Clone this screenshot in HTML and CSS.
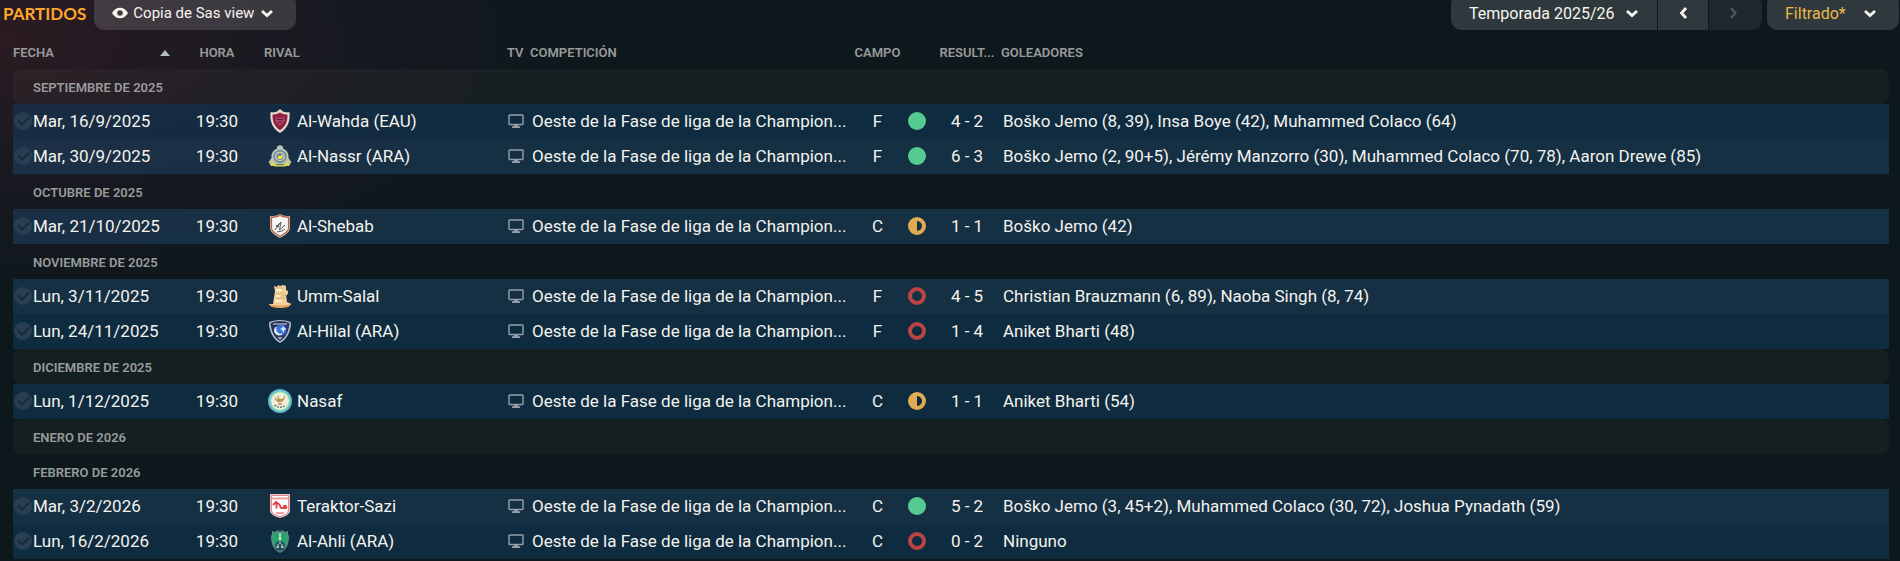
FILE: index.html
```html
<!DOCTYPE html>
<html lang="es">
<head>
  <meta charset="UTF-8">
  <meta name="viewport" content="width=device-width, initial-scale=1.0">
  <title>Partidos</title>
  <link rel="stylesheet" href="styles.css">
</head>
<body>
  <!-- shared icons -->
  <svg class="icon-defs" aria-hidden="true">
    <symbol id="chevron" viewBox="0 0 14 9"><path d="M2 2l5 4.600L12 2" fill="none" stroke="currentColor" stroke-width="2.800"/></symbol>
    <symbol id="tv" viewBox="0 0 16 14"><path d="M1.700 1h12.600a.7.7 0 0 1 .7.7v8.100a.7.7 0 0 1-.7.7H1.700a.7.7 0 0 1-.7-.7V1.700a.7.7 0 0 1 .7-.7z" fill="none" stroke="currentColor" stroke-width="1.400"/><path d="M6 10.500h4v1.700h2V14H4v-1.800h2z" fill="currentColor"/></symbol>
    <symbol id="win" viewBox="0 0 18 18"><circle cx="9" cy="9" r="9" fill="#55cb91"/></symbol>
    <symbol id="draw" viewBox="0 0 18 18"><path fill-rule="evenodd" d="M9 0a9 9 0 1 1 0 18A9 9 0 0 1 9 0zm0 4v10a5 5 0 0 0 0-10z" fill="#e0ac51"/></symbol>
    <symbol id="loss" viewBox="0 0 18 18"><circle cx="9" cy="9" r="7" fill="none" stroke="#b94445" stroke-width="4"/></symbol>
  </svg>

  <header class="toolbar">
    <h1>PARTIDOS</h1>
    <label class="control view">
      <svg class="eye" viewBox="0 0 16 12"><path fill-rule="evenodd" d="M0 6C2 2.500 4.800.7 8 .7s6 1.800 8 5.300c-2 3.500-4.800 5.300-8 5.300S2 9.500 0 6zm8-2.800a2.800 2.800 0 1 0 0 5.600 2.800 2.800 0 0 0 0-5.600z" fill="currentColor"/></svg>
      <select aria-label="Vista"><option>Copia de Sas view</option></select>
      <svg class="chevron"><use href="#chevron"/></svg>
    </label>
    <div class="season-group">
      <label class="control season">
        <select aria-label="Temporada"><option>Temporada 2025/26</option></select>
        <svg class="chevron"><use href="#chevron"/></svg>
      </label>
      <button class="control step" aria-label="Anterior"><svg class="arrow" viewBox="0 0 9 14"><path d="M7 2L2.500 7 7 12" fill="none" stroke="currentColor" stroke-width="2.800"/></svg></button>
      <button class="control step next" aria-label="Siguiente" disabled><svg class="arrow" viewBox="0 0 9 14"><path d="M2 2l4.500 5L2 12" fill="none" stroke="currentColor" stroke-width="2.200"/></svg></button>
    </div>
    <button class="control filter"><span>Filtrado*</span><svg class="chevron"><use href="#chevron"/></svg></button>
  </header>

  <main>
    <table class="fixtures">
      <colgroup>
        <col class="col-date">
        <col class="col-time">
        <col class="col-rival">
        <col class="col-tv">
        <col class="col-comp">
        <col class="col-venue">
        <col class="col-mark">
        <col class="col-result">
        <col>
      </colgroup>
      <thead>
        <tr>
          <th><div class="sorted">FECHA <svg class="sort" viewBox="0 0 10 6"><path d="M5 0l5 6H0z" fill="#b5bbc2"/></svg></div></th>
          <th class="center">HORA</th>
          <th>RIVAL</th>
          <th>TV</th>
          <th>COMPETICIÓN</th>
          <th class="center">CAMPO</th>
          <td></td>
          <th class="result">RESULT...</th>
          <th class="scorers">GOLEADORES</th>
        </tr>
      </thead>
      <tbody>
        <tr class="month"><th colspan="9">SEPTIEMBRE DE 2025</th></tr>
        <tr class="match">
          <td><label class="date"><input type="checkbox"> Mar, 16/9/2025</label></td>
          <td class="center">19:30</td>
          <td><div class="rival"><svg class="crest" viewBox="0 0 24 24"><path d="M12 0l3 2.500c2 .8 4 1 6.500.8.700 8-1 15.500-9.500 20.700C3.500 18.800 1.800 11.300 2.500 3.300 5 3.500 7 3.300 9 2.500z" fill="#e5dccb"/><path d="M12 3.500c2.500 1.500 4.800 2 7.500 2 0 7-1.500 11.800-7.500 15.700C6 17.300 4.500 12.500 4.500 5.500c2.700 0 5-.5 7.500-2z" fill="#8c2143"/><path d="M7.500 8.500h9v4L12 17l-4.500-4.500z" fill="#a9456a"/><path d="M9 10.500h6M10 13h4" stroke="#611536"/></svg>Al-Wahda (EAU)</div></td>
          <td><svg class="tv"><use href="#tv"/></svg></td>
          <td class="comp">Oeste de la Fase de liga de la Champion...</td>
          <td class="center">F</td>
          <td class="center"><svg class="mark"><use href="#win"/></svg></td>
          <td class="result">4 - 2</td>
          <td class="scorers">Boško Jemo (8, 39), Insa Boye (42), Muhammed Colaco (64)</td>
        </tr>
        <tr class="match">
          <td><label class="date"><input type="checkbox"> Mar, 30/9/2025</label></td>
          <td class="center">19:30</td>
          <td><div class="rival"><svg class="crest" viewBox="0 0 24 24"><path d="M12 1l3 1.500v2c4 1.500 6 5 5.500 9.500l3 4-2.500 4H3L.5 18l3-4C3 9.500 5 6 9 4.500v-2z" fill="#b8c1b5"/><path d="M4 17c2 3 5 4.500 8 4.500s6-1.500 8-4.500l2 3-5 2.500H7L2 20z" fill="#dfdc3e"/><circle cx="12" cy="12.500" r="6.500" fill="#64849a"/><circle cx="12" cy="12.500" r="5" fill="#c6cfb0"/><circle cx="12" cy="12.500" r="3.500" fill="#7185a1"/><path d="M10 12h3l1-2 1 3-2 2h-3z" fill="#f1eb39"/><path d="M8 20.500h8" stroke="#61756a"/></svg>Al-Nassr (ARA)</div></td>
          <td><svg class="tv"><use href="#tv"/></svg></td>
          <td class="comp">Oeste de la Fase de liga de la Champion...</td>
          <td class="center">F</td>
          <td class="center"><svg class="mark"><use href="#win"/></svg></td>
          <td class="result">6 - 3</td>
          <td class="scorers">Boško Jemo (2, 90+5), Jérémy Manzorro (30), Muhammed Colaco (70, 78), Aaron Drewe (85)</td>
        </tr>
        <tr class="month"><th colspan="9">OCTUBRE DE 2025</th></tr>
        <tr class="match">
          <td><label class="date"><input type="checkbox"> Mar, 21/10/2025</label></td>
          <td class="center">19:30</td>
          <td><div class="rival"><svg class="crest" viewBox="0 0 24 24"><path d="M12 0c3 1.800 6 2 10 2v12c0 4-5 7.500-10 10C7 21.500 2 18 2 14V2c4 0 7-.2 10-2z" fill="#b9b5b2"/><path d="M12 1.500c3 1.500 5.500 1.800 8.500 1.800V14c0 3.500-4.300 6-8.500 8.300C7.800 20 3.500 17.500 3.500 14V3.300c3 0 5.500-.3 8.500-1.800z" fill="#f8f8f7" stroke="#c2603a" stroke-width="1.200"/><path d="M7 16l6-8-1.500 8L17 11M8 11l3 2M9 18l5-1 3-2M12 9l-4 4" fill="none" stroke="#56585c"/></svg>Al-Shebab</div></td>
          <td><svg class="tv"><use href="#tv"/></svg></td>
          <td class="comp">Oeste de la Fase de liga de la Champion...</td>
          <td class="center">C</td>
          <td class="center"><svg class="mark"><use href="#draw"/></svg></td>
          <td class="result">1 - 1</td>
          <td class="scorers">Boško Jemo (42)</td>
        </tr>
        <tr class="month"><th colspan="9">NOVIEMBRE DE 2025</th></tr>
        <tr class="match">
          <td><label class="date"><input type="checkbox"> Lun, 3/11/2025</label></td>
          <td class="center">19:30</td>
          <td><div class="rival"><svg class="crest" viewBox="0 0 24 24"><path d="M5 20L7 7l-1-5 3 1 1-2 2 1 3-1 3 1v4l2 1v3l-2 1 1 7 4.500 2L20 23l-8 1-8-1L.500 20z" fill="#f3d09b"/><path d="M1 20c6 2 15 2 22 0l-3 3-8 .800L4 23z" fill="#e99e50"/><path d="M8 4h9M8 10l8-1M8 14h9M14 12l5-1" stroke="#dcb075"/><path d="M8 6h6M8 12h4M7 17h7" stroke="#fff0c7" stroke-width="2"/></svg>Umm-Salal</div></td>
          <td><svg class="tv"><use href="#tv"/></svg></td>
          <td class="comp">Oeste de la Fase de liga de la Champion...</td>
          <td class="center">F</td>
          <td class="center"><svg class="mark"><use href="#loss"/></svg></td>
          <td class="result">4 - 5</td>
          <td class="scorers">Christian Brauzmann (6, 89), Naoba Singh (8, 74)</td>
        </tr>
        <tr class="match">
          <td><label class="date"><input type="checkbox"> Lun, 24/11/2025</label></td>
          <td class="center">19:30</td>
          <td><div class="rival"><svg class="crest" viewBox="0 0 24 24"><path d="M1 3.500C5 0 19 0 23 3.500 23 13 18.500 20.500 12 24 5.500 20.500 1 13 1 3.500z" fill="#b7bccb"/><path d="M2.500 4.300C7 1.300 17 1.300 21.500 4.300 21 12 17.500 19 12 22.300 6.500 19 3 12 2.500 4.300z" fill="#27345f"/><path d="M5 5h14" stroke="#a2a8b8" stroke-width="1.500"/><circle cx="13" cy="11" r="5.500" fill="#3f73dc"/><path d="M15 7l1.500 2 2 1-2 1-1 3-1.500-3-2-1 2-1z" fill="#c8e5ff"/><path d="M8 8c-4 5 1 10 6 7-4 1-7-2-6-7z" fill="#f4f5fa" stroke="#f4f5fa"/><path d="M9 18h6l-3 3z" fill="#9aa1b4"/></svg>Al-Hilal (ARA)</div></td>
          <td><svg class="tv"><use href="#tv"/></svg></td>
          <td class="comp">Oeste de la Fase de liga de la Champion...</td>
          <td class="center">F</td>
          <td class="center"><svg class="mark"><use href="#loss"/></svg></td>
          <td class="result">1 - 4</td>
          <td class="scorers">Aniket Bharti (48)</td>
        </tr>
        <tr class="month"><th colspan="9">DICIEMBRE DE 2025</th></tr>
        <tr class="match">
          <td><label class="date"><input type="checkbox"> Lun, 1/12/2025</label></td>
          <td class="center">19:30</td>
          <td><div class="rival"><svg class="crest" viewBox="0 0 24 24"><circle cx="12" cy="12" r="12" fill="#63b5d4"/><circle cx="12" cy="12" r="10.300" fill="#7dddb0"/><circle cx="12" cy="12" r="8.800" fill="#f0eedc"/><path d="M7 6c-1 6 3 8 6 7s5-4 3-7c0 3-1 4-3 4s-3-1-2-4c-2 1-2 3-1 5-2-1-3-3-3-5z" fill="#b8984c"/><path d="M6.500 16c3 3 8 3 11 0" fill="none" stroke="#5d8066" stroke-width="1.500" stroke-dasharray="2 1"/><path d="M10 15h4" stroke="#df7662" stroke-width="1.500"/></svg>Nasaf</div></td>
          <td><svg class="tv"><use href="#tv"/></svg></td>
          <td class="comp">Oeste de la Fase de liga de la Champion...</td>
          <td class="center">C</td>
          <td class="center"><svg class="mark"><use href="#draw"/></svg></td>
          <td class="result">1 - 1</td>
          <td class="scorers">Aniket Bharti (54)</td>
        </tr>
        <tr class="month"><th colspan="9">ENERO DE 2026</th></tr>
        <tr class="month"><th colspan="9">FEBRERO DE 2026</th></tr>
        <tr class="match">
          <td><label class="date"><input type="checkbox"> Mar, 3/2/2026</label></td>
          <td class="center">19:30</td>
          <td><div class="rival"><svg class="crest" viewBox="0 0 24 24"><path d="M2 0h20v17c-1 4-6 6-10 7-4-1-9-3-10-7z" fill="#dcc7c9"/><path d="M3.500 1.500h17V17c-1 3-5 4.500-8.500 5.500C8.500 21.500 4.500 20 3.500 17z" fill="#fff" stroke="#ed8489"/><path d="M4 4.500h16" stroke="#ef9c9f" stroke-width="2"/><path d="M5 11l3-3 4 3M8.500 9v5.500M12 11c0 4 4 4 4 1 2-1 3 1 2 2h-3" fill="none" stroke="#e73c40" stroke-width="1.800"/><path d="M8 19h8" stroke="#f0a2a5" stroke-width="2"/></svg>Teraktor-Sazi</div></td>
          <td><svg class="tv"><use href="#tv"/></svg></td>
          <td class="comp">Oeste de la Fase de liga de la Champion...</td>
          <td class="center">C</td>
          <td class="center"><svg class="mark"><use href="#win"/></svg></td>
          <td class="result">5 - 2</td>
          <td class="scorers">Boško Jemo (3, 45+2), Muhammed Colaco (30, 72), Joshua Pynadath (59)</td>
        </tr>
        <tr class="match">
          <td><label class="date"><input type="checkbox"> Lun, 16/2/2026</label></td>
          <td class="center">19:30</td>
          <td><div class="rival"><svg class="crest" viewBox="0 0 24 24"><path d="M4 2l3 1 3-2 2 2 2-2 3 2 3-1v3l1 2c0 9-3 14-9 17C6 21 3 16 3 7l1-2z" fill="#5d8a88"/><path d="M5 4c5 .5 9 .5 14 0 1 9-1 15-7 18C6 19 4 13 5 4z" fill="#25a568"/><circle cx="12" cy="17" r="5" fill="#26515c"/><path d="M10 15v4M14 15v4M8 18h3M13 18h3M12 12v3" stroke="#c0e4d5"/><path d="M12 4v6M10.500 10h3" stroke="#d3f0df" stroke-width="1.500"/></svg>Al-Ahli (ARA)</div></td>
          <td><svg class="tv"><use href="#tv"/></svg></td>
          <td class="comp">Oeste de la Fase de liga de la Champion...</td>
          <td class="center">C</td>
          <td class="center"><svg class="mark"><use href="#loss"/></svg></td>
          <td class="result">0 - 2</td>
          <td class="scorers">Ninguno</td>
        </tr>
      </tbody>
    </table>
  </main>
</body>
</html>
```
FILE: styles.css
```css
* {
  box-sizing: border-box;
}

body {
  margin: 0;
  min-height: 100vh;
  background: radial-gradient(ellipse 600px 270px at 0 40px, #2b1b22 0%, #1a1921 45%, #0d181c 100%) no-repeat #0d181c;
  color: #f4f3ee;
  font-family: Roboto, sans-serif;
  font-size: 17px;
}

svg {
  display: block;
  flex: none;
}

.icon-defs {
  display: none;
}

/* the toolbar tucks under the top edge of the window */
.toolbar {
  display: flex;
  align-items: center;
  height: 36px;
  margin-top: -6px;
  padding: 0 1px 0 3px;
}

h1 {
  margin: 0 8px 0 0;
  padding-top: 4px;
  color: #ffa62b;
  font-family: Lato, sans-serif;
  font-size: 17px;
  line-height: 24px;
  font-weight: 700;
}

.control {
  display: flex;
  align-items: center;
  justify-content: center;
  height: 36px;
  margin: 0;
  padding: 2px 18px 0;
  border: 0;
  border-radius: 10px;
  background-color: rgba(255, 255, 255, 0.14);
  color: #f7f5ee;
  font-family: Roboto, sans-serif;
  font-size: 16px;
  cursor: pointer;
}

.control select {
  appearance: none;
  margin: 0;
  padding: 0;
  border: 0;
  outline: none;
  background: none;
  color: inherit;
  font: inherit;
}

.view {
  width: 202px;
  padding-right: 22px;
  justify-content: space-between;
  font-size: 15px;
}

.season-group {
  display: flex;
  gap: 1px;
  margin-left: auto;
  margin-right: 5px;
}

.season {
  width: 206px;
  justify-content: space-between;
  border-radius: 10px 0 0 10px;
}

.step {
  width: 50px;
  border-radius: 0;
}

.step.next {
  width: 53px;
  padding-right: 22px;
  border-radius: 0 10px 10px 0;
  background-color: rgba(255, 255, 255, 0.07);
  color: #50585b;
}

.filter {
  width: 132px;
  justify-content: space-between;
  padding-right: 22px;
}

.filter span {
  color: #e9b949;
}

.eye {
  width: 16px;
  height: 12px;
}

.chevron {
  width: 14px;
  height: 9px;
}

.arrow {
  width: 9px;
  height: 14px;
}

main {
  padding: 4px 11px 0 13px;
}

.fixtures {
  width: 100%;
  table-layout: fixed;
  border-spacing: 0;
}

.col-date { width: 157px; }
.col-time { width: 94px; }
.col-rival { width: 243px; }
.col-tv { width: 23px; }
.col-comp { width: 320px; }
.col-venue { width: 55px; }
.col-mark { width: 24px; }
.col-result { width: 67px; }

.fixtures th,
.fixtures td {
  height: 35px;
  padding: 0 0 2px;
  text-align: left;
  white-space: nowrap;
}

.fixtures th {
  padding: 2px 0 0;
  color: #989b9b;
  font-size: 13px;
  font-weight: 600;
}

.fixtures .center {
  text-align: center;
}

.fixtures .result {
  padding-left: 9px;
  text-align: center;
}

.fixtures th.scorers {
  padding-left: 5px;
}

.fixtures td.scorers {
  padding-left: 7px;
}

.sorted {
  display: flex;
  align-items: center;
  justify-content: space-between;
}

.sort {
  width: 10px;
  height: 6px;
}

.fixtures .month th {
  padding-left: 20px;
  border-radius: 8px;
}

.month:nth-child(odd) th {
  background-color: rgba(255, 240, 220, 0.03);
}

.match {
  background-color: rgba(17, 66, 106, 0.45);
}

.match:nth-child(odd) {
  background-color: rgba(32, 76, 116, 0.45);
}

.date {
  display: flex;
  align-items: center;
}

.date input {
  appearance: none;
  display: flex;
  align-items: center;
  justify-content: center;
  flex: none;
  width: 18px;
  height: 18px;
  margin: 0 1px;
  border-radius: 50%;
  background-color: #293f51;
}

.date input::before {
  content: "";
  width: 9px;
  height: 5px;
  margin-bottom: 2px;
  border-left: 2px solid #152b3d;
  border-bottom: 2px solid #152b3d;
  transform: rotate(-45deg);
}

.rival {
  display: flex;
  align-items: center;
  gap: 5px;
  padding-left: 4px;
}

.crest {
  width: 24px;
  height: 24px;
}

.tv {
  width: 16px;
  height: 14px;
  margin-left: 1px;
  color: #94a0a9;
}

.fixtures .comp {
  padding-left: 2px;
  overflow: hidden;
}

.mark {
  width: 18px;
  height: 18px;
  margin: 0 auto;
}
```
